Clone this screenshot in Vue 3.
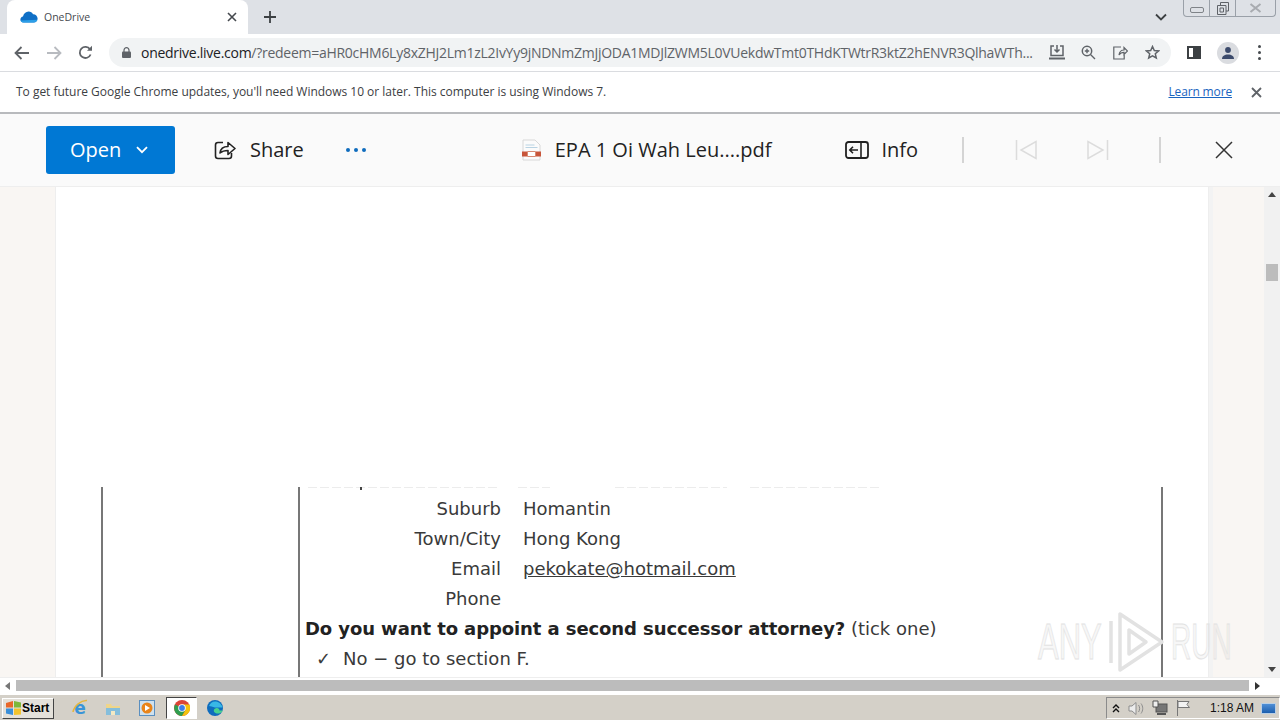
<script setup>
const rows = [
  { label: 'Suburb', value: 'Homantin' },
  { label: 'Town/City', value: 'Hong Kong' },
  { label: 'Email', value: 'pekokate@hotmail.com', link: true },
  { label: 'Phone', value: '' }
]
</script>

<template>
  <div class="screen">
    <div class="tabstrip">
      <div class="tab">
        <svg class="cloud" width="18" height="12" viewBox="0 0 18 12"><path d="M3.6 11.6C1.6 11.6.4 10.2.4 8.6c0-1.6 1.2-2.8 2.6-3C3.6 2.8 5.8.6 8.6.6c2 0 3.6 1 4.4 2.6 2.4-.2 4.6 1.8 4.6 4.4 0 2.2-1.6 4-4 4z" fill="#0f6fc6"/><path d="M.6 9.4C1 10.8 2.200 11.600 3.600 11.600h10c2 0 3.400-1.200 3.900-2.800z" fill="#2c9fe8"/></svg>
        <span class="tab-title">OneDrive</span>
        <svg class="tab-close" width="10" height="10" viewBox="0 0 10 10"><path d="M1 1l8 8M9 1l-8 8" stroke="#45494e" stroke-width="1.600"/></svg>
      </div>
      <svg class="newtab" width="12" height="12" viewBox="0 0 12 12"><path d="M6 0v12M0 6h12" stroke="#3c4043" stroke-width="1.800"/></svg>
      <div class="strip-fill"></div>
      <svg class="tabs-menu" width="12" height="8" viewBox="0 0 12 8"><path d="M1 1.500l5 5 5-5" fill="none" stroke="#3c4043" stroke-width="1.800"/></svg>
      <div class="wincontrols">
        <div class="wc wc-min"><span class="min-glyph"></span></div>
        <div class="wc wc-max">
          <svg width="12" height="13" viewBox="0 0 12 13"><path d="M3.500 3V.5h8v8.500H9M.5 3.500h8.500v9H.5zM3 6h3.500v4H3z" fill="none" stroke="#5f6368"/></svg>
        </div>
        <div class="wc wc-close">
          <svg width="13" height="10" viewBox="0 0 13 10"><path d="M1.500 1l10 8M11.500 1l-10 8" stroke="#a8abb0" stroke-width="2"/></svg>
        </div>
      </div>
    </div>

    <div class="toolbar">
      <svg class="nav" width="16" height="14" viewBox="0 0 16 14"><path d="M15 7H2M7.500 1L1.500 7l6 6" fill="none" stroke="#5f6368" stroke-width="1.800"/></svg>
      <svg class="nav" width="16" height="14" viewBox="0 0 16 14"><path d="M1 7h13M8.500 1l6 6-6 6" fill="none" stroke="#b8bbc0" stroke-width="1.800"/></svg>
      <svg class="nav" width="15" height="15" viewBox="0 0 15 15"><path d="M12.600 9.500A5.600 5.600 0 1 1 12 4.200" fill="none" stroke="#5f6368" stroke-width="1.800"/><path d="M14 .8v5H9z" fill="#5f6368"/></svg>
      <div class="omnibox">
        <svg class="lock" width="9" height="11" viewBox="0 0 9 11"><path d="M2 5V3.200a2.500 2.500 0 0 1 5 0V5" fill="none" stroke="#5f6368" stroke-width="1.200"/><rect y="4.500" width="9" height="6.500" rx="1" fill="#5f6368"/></svg>
        <div class="url"><span class="host">onedrive.live.com</span><span class="path">/?redeem=aHR0cHM6Ly8xZHJ2Lm1zL2IvYy9jNDNmZmJjODA1MDJlZWM5L0VUekdwTmt0THdKTWtrR3ktZ2hENVR3QlhaWTh...</span></div>
        <svg class="omni-ic" width="16" height="15" viewBox="0 0 16 15"><path d="M5 1H2v9.500h12V1h-3M8 0v6.500M5.500 4.500L8 7l2.500-2.500" fill="none" stroke="#5f6368" stroke-width="1.500"/><path d="M0 12.500h16v2H0z" fill="#5f6368"/></svg>
        <svg class="omni-ic zoom-ic" width="15" height="15" viewBox="0 0 15 15"><circle cx="6" cy="6" r="4.700" fill="none" stroke="#5f6368" stroke-width="1.500"/><path d="M9.500 9.500l4.500 4.500M3.800 6h4.400M6 3.800v4.400" stroke="#5f6368" stroke-width="1.400"/></svg>
        <svg class="omni-ic" width="15" height="14" viewBox="0 0 15 14"><path d="M8 1H.8v12h10.400V9M6 9C6.500 5.500 9 4 11 4V1.500L14.500 5 11 8.500V6.300C9 6.300 7.300 7 6 9z" fill="none" stroke="#5f6368" stroke-width="1.200"/></svg>
        <svg class="omni-ic" width="15" height="15" viewBox="0 0 15 15"><path d="M7.500 1.500l1.800 4 4.300.4-3.300 2.900 1 4.200-3.800-2.200L3.700 13l1-4.200L1.400 5.900l4.300-.4z" fill="none" stroke="#5f6368" stroke-width="1.500"/></svg>
      </div>
      <div class="sidepanel"></div>
      <div class="avatar">
        <svg width="12" height="12" viewBox="0 0 12 12"><circle cx="6" cy="3" r="2.900" fill="#3c4a6b"/><path d="M0 12c0-3 2.500-4.500 6-4.500S12 9 12 12z" fill="#3c4a6b"/></svg>
      </div>
      <div class="kebab"><i></i><i></i><i></i></div>
    </div>

    <div class="infobar">
      <span class="info-msg">To get future Google Chrome updates, you'll need Windows 10 or later. This computer is using Windows 7.</span>
      <a class="learn">Learn more</a>
      <svg class="info-close" width="11" height="11" viewBox="0 0 11 11"><path d="M1 1l9 9M10 1l-9 9" stroke="#5f6368" stroke-width="1.800"/></svg>
    </div>

    <div class="commandbar">
      <button class="open-btn">Open
        <svg width="12" height="8" viewBox="0 0 12 8"><path d="M1 1.200l5 5 5-5" fill="none" stroke="#fff" stroke-width="1.800"/></svg>
      </button>
      <div class="share">
        <svg width="22" height="22" viewBox="0 0 22 22"><path d="M9 3.500H4a2.500 2.500 0 0 0-2.500 2.500v11A2.500 2.500 0 0 0 4 19.500h11a2.500 2.500 0 0 0 2.500-2.500v-3" fill="none" stroke="#222" stroke-width="1.600"/><path d="M6 14c.5-4.500 4-6.500 8-6.500V3.500l7 6-7 6v-4c-3.500 0-6 .8-8 2.500z" fill="none" stroke="#222" stroke-width="1.600" stroke-linejoin="round"/></svg>
        <span>Share</span>
      </div>
      <div class="more"><i></i><i></i><i></i></div>
      <div class="file">
        <svg width="19" height="22" viewBox="0 0 19 22"><path d="M1 1h12l5 5v15H1z" fill="#fbfbfb" stroke="#d8d8d8"/><path d="M3.500 6h9M3.500 8.500h12" stroke="#b9d3e3"/><path d="M0 12.500h5.500v5H0zM13.500 12.500H19v5h-5.500z" fill="#c8553a"/><path d="M5.500 12.500h8v5h-8z" fill="#fff" stroke="#d78a72"/></svg>
        <span>EPA 1 Oi Wah Leu....pdf</span>
      </div>
      <div class="info">
        <svg width="24" height="18" viewBox="0 0 24 18"><rect x="1" y="1" width="22" height="16" rx="2.500" fill="none" stroke="#222" stroke-width="1.800"/><path d="M16 1v16M13 9H5M8 5.800L4.800 9 8 12.200" fill="none" stroke="#222" stroke-width="1.600"/></svg>
        <span>Info</span>
      </div>
      <span class="vsep"></span>
      <svg class="pager" width="22" height="22" viewBox="0 0 22 22"><path d="M1.500 1v20M21 2.500v17L6 11z" fill="none" stroke="#dcdcdc" stroke-width="1.500"/></svg>
      <svg class="pager" width="22" height="22" viewBox="0 0 22 22"><path d="M20.500 1v20M1 2.500v17L16 11z" fill="none" stroke="#dcdcdc" stroke-width="1.500"/></svg>
      <span class="vsep"></span>
      <svg class="viewer-close" width="18" height="18" viewBox="0 0 18 18"><path d="M1 1l16 16M17 1L1 17" stroke="#333" stroke-width="1.500"/></svg>
    </div>

    <div class="viewport">
      <div class="gutter"></div>
      <div class="page">
        <div class="form">
          <div class="col-left"></div>
          <div class="col-right">
            <div class="cut-line"><i class="cut-a"></i><i class="cut-b"></i><i class="cut-c"></i><i class="cut-d"></i><em class="cut-dot"></em></div>
            <div v-for="row in rows" :key="row.label" class="row">
              <span class="label">{{ row.label }}</span>
              <span :class="['value', { 'value-link': row.link }]">{{ row.value }}</span>
            </div>
            <div class="row question"><b>Do you want to appoint a second successor attorney?</b> (tick one)</div>
            <div class="row answer"><span class="tick">✓</span>No − go to section F.</div>
          </div>
        </div>
      </div>
      <div class="gutter gutter-right"></div>
      <div class="vscroll">
        <span class="arrow-up"></span>
        <span class="thumb"></span>
        <span class="arrow-down"></span>
      </div>
      <div class="watermark" aria-hidden="true">
        <span class="wm-any">ANY</span>
        <svg width="58" height="62" viewBox="0 0 58 62"><path d="M3 10v42M12 3v56l42-28zM21 19v24l17-12z" fill="none" stroke="#e2e2e2" stroke-width="3.500" stroke-linejoin="round"/></svg>
        <span class="wm-run">RUN</span>
      </div>
    </div>

    <div class="hscroll">
      <span class="h-left"></span>
      <span class="h-thumb"></span>
      <span class="h-right"></span>
      <span class="h-corner"></span>
    </div>

    <div class="taskbar">
      <div class="start">
        <svg width="17" height="16" viewBox="0 0 17 16"><path d="M1 3l7-2v6.500H1z" fill="#e8672a"/><path d="M9 1l7 1.500v5H9z" fill="#7db83a"/><path d="M1 8.500h7V15l-7-1.500z" fill="#3a8fd9"/><path d="M9 8.500h7v6L9 15z" fill="#f1c32e"/></svg>
        <span>Start</span>
      </div>
      <div class="quick">
        <svg width="18" height="18" viewBox="0 0 18 18"><text x="9" y="15" text-anchor="middle" font-family="DejaVu Sans" font-size="17" font-weight="700" fill="#3a94d8">e</text><path d="M2 13C3 7 10 1 16 1.500" fill="none" stroke="#e5b63d" stroke-width="1.500"/></svg>
        <svg width="16" height="15" viewBox="0 0 16 15"><path d="M1 3h5l1 2h8v9H1z" fill="#efd58a"/><path d="M1 7h14v7H1z" fill="#85bedc"/><path d="M6 10h4v4H6z" fill="#f3e9c4"/></svg>
        <svg class="media" width="16" height="16" viewBox="0 0 16 16"><rect x=".5" y=".5" width="15" height="15" fill="#cfe1ee" stroke="#5a8fc0"/><circle cx="8" cy="8" r="5.500" fill="#e98419"/><path d="M6 5l5 3-5 3z" fill="#fff"/></svg>
        <div class="chrome-item">
          <svg width="16" height="16" viewBox="0 0 16 16"><circle cx="8" cy="8" r="8" fill="#dc4437"/><path d="M8 8L1 4.500A8 8 0 0 0 8 16l3.500-6z" fill="#2f9e4f"/><path d="M8 4.500h7.400A8 8 0 0 1 8 16l3.500-6z" fill="#f4c20d"/><circle cx="8" cy="8" r="3.800" fill="#fff"/><circle cx="8" cy="8" r="2.900" fill="#3f7ee8"/></svg>
        </div>
        <svg width="16" height="16" viewBox="0 0 16 16"><circle cx="8" cy="8" r="8" fill="#0f6cbd"/><path d="M16 9c0 3-3 5-6 4.500C7 13 6 10.500 7.500 9c2-1.800 5-1 5 1.500h3.300z" fill="#47d18f"/><path d="M2 6c1-3 4-5 7-4.500 3 .5 6 3 6.500 6H8C5.500 7 3.500 6 2 6z" fill="#38b7e6"/></svg>
      </div>
      <div class="task-fill"></div>
      <div class="tray">
        <svg width="8" height="9" viewBox="0 0 8 9"><path d="M1 4l3-3 3 3M1 8l3-3 3 3" fill="none" stroke="#111" stroke-width="1.400"/></svg>
        <svg width="16" height="15" viewBox="0 0 16 15"><path d="M1 5h3l4-3.500v12L4 10H1z" fill="#ececec" stroke="#8d8d8d"/><path d="M10.500 4c1.500 2 1.500 5 0 7M13 2.500c2.300 3 2.300 7 0 10" fill="none" stroke="#8d8d8d"/></svg>
        <svg width="16" height="16" viewBox="0 0 16 16"><rect x="4" y="4" width="11" height="8" fill="#767676" stroke="#555"/><path d="M1 1h5v6H1z" fill="#eee" stroke="#555"/><path d="M5 14h9" stroke="#555" stroke-width="2"/></svg>
        <svg width="15" height="16" viewBox="0 0 15 16"><path d="M1.500 0v16M2 1.500h11L11 4.500l2.500 3H2z" fill="#f3f3f3" stroke="#777"/></svg>
        <span class="clock">1:18 AM</span>
        <span class="show-desktop"></span>
      </div>
    </div>
  </div>
</template>

<style scoped>
.screen { width: 1280px; height: 720px; display: flex; flex-direction: column; overflow: hidden; background: #fff; font-family: "Open Sans", "Noto Sans", sans-serif; position: relative; }
svg { display: block; flex: none; }

.tabstrip { height: 34px; flex: none; display: flex; align-items: center; background: #dee1e6; }
.tab { width: 241px; height: 34px; margin: 0 0 0 7px; align-self: flex-end; background: #fff; border-radius: 8px 8px 0 0; display: flex; align-items: center; padding: 0 11px 0 13px; box-sizing: border-box; }
.tab-title { font-size: 10.500px; color: #45494e; margin-left: 6px; flex: 1; }
.newtab { margin-left: 16px; }
.strip-fill { flex: 1; }
.tabs-menu { margin: 0 16px 0 0; }
.wincontrols { width: 93px; height: 17px; align-self: flex-start; margin-right: 4px; display: flex; border: 1px solid #9aa0a8; border-top: 0; border-radius: 0 0 4px 4px; box-sizing: border-box; }
.wc { height: 16px; display: flex; align-items: center; justify-content: center; border-right: 1px solid #9aa0a8; }
.wc-min { width: 25px; }
.min-glyph { width: 12px; height: 4px; border: 1px solid #7f8388; border-radius: 2px; margin-top: 4px; }
.wc-max { width: 25px; }
.wc-close { flex: 1; border-right: 0; }

.toolbar { height: 38px; flex: none; display: flex; align-items: center; background: #fff; border-bottom: 1px solid #dadce0; box-sizing: border-box; }
.nav { margin-left: 16px; }
.toolbar .nav:first-child { margin-left: 14px; }
.omnibox { width: 1062px; height: 29px; margin-left: 16px; border-radius: 15px; background: #f1f3f4; display: flex; align-items: center; padding: 0 11px 0 13px; box-sizing: border-box; }
.lock { margin-right: 10px; }
.url { width: 894px; font-size: 14px; letter-spacing: -.27px; white-space: nowrap; margin-right: 16px; }
.host { color: #202124; }
.path { color: #5f6368; }
.omni-ic { margin-right: 17px; }
.zoom-ic { margin-left: -1px; }
.omni-ic:last-child { margin-right: 0; }
.sidepanel { width: 14px; height: 13px; margin-left: 16px; background: #fff; border: 2px solid #3c4043; border-left-width: 8px; box-sizing: border-box; transform: scaleX(-1); }
.avatar { width: 22px; height: 22px; border-radius: 50%; margin-left: 16px; background: #dadce0; display: flex; align-items: center; justify-content: center; }
.kebab { margin-left: 19px; display: flex; flex-direction: column; gap: 3px; }
.kebab i { width: 3px; height: 3px; border-radius: 50%; background: #45494e; }

.infobar { height: 40px; flex: none; display: flex; align-items: center; padding: 0 18px 0 16px; background: #fff; font-size: 12px; color: #3c4043; }
.info-msg { flex: 1; letter-spacing: -.02px; padding-bottom: 2px; }
.learn { color: #1a64c0; text-decoration: underline; margin-right: 19px; letter-spacing: -.15px; padding-bottom: 2px; }

.commandbar { height: 75px; flex: none; display: flex; align-items: center; background: #fafafa; border-top: 2px solid #b8babd; border-bottom: 1px solid #eee; box-sizing: border-box; padding-left: 46px; color: #222; font-size: 20px; }
.commandbar span { padding-bottom: 2px; }
.open-btn { width: 129px; height: 48px; background: #0078d4; color: #fff; border: 0; border-radius: 3px; font: 400 20px "Open Sans", sans-serif; display: flex; align-items: center; justify-content: flex-start; gap: 15px; padding: 0 0 1px 24px; }
.share { display: flex; align-items: center; gap: 14px; margin-left: 39px; }
.more { display: flex; gap: 4px; margin-left: 42px; }
.more i { width: 4px; height: 4px; border-radius: 50%; background: #0f6cbd; }
.file { display: flex; align-items: center; gap: 14px; margin-left: 156px; }
.info { display: flex; align-items: center; gap: 12px; margin-left: 74px; }
.vsep { width: 2px; height: 26px; padding: 0 !important; background: #d4d4d4; }
.info + .vsep { margin-left: 44px; }
.pager { margin-left: 51px; }
.pager + .pager { margin-left: 50px; }
.pager + .vsep { margin-left: 50px; }
.viewer-close { margin-left: 54px; }

.viewport { height: 490px; flex: none; display: flex; background: #f9f6f3; position: relative; }
.gutter { width: 55px; flex: none; }
.gutter-right { flex: 1; }
.page { width: 1154px; flex: none; box-sizing: border-box; background: #fff; border-left: 1px solid #eee; border-right: 1px solid #eee; box-shadow: 4px 0 0 #f3f3f3; padding: 300px 45px 0 45px; overflow: hidden; }
.form { height: 190px; display: flex; border-left: 2px solid #777; border-right: 2px solid #777; font-family: "DejaVu Sans", Verdana, sans-serif; font-size: 18px; color: #3a3a3a; }
.col-left { width: 195px; flex: none; border-right: 2px solid #777; }
.col-right { flex: 1; position: relative; }
.cut-line { height: 7px; position: relative; }
.cut-line i { position: absolute; top: 0; height: 1px; background: repeating-linear-gradient(90deg, #ececec 0 9px, transparent 9px 12px); }
.cut-a { left: 8px; width: 190px; }
.cut-b { left: 218px; width: 32px; }
.cut-c { left: 315px; width: 112px; }
.cut-d { left: 450px; width: 130px; }
.cut-dot { position: absolute; left: 60px; top: 0; width: 2px; height: 3px; background: #444; }
.row { height: 29.900px; display: flex; align-items: center; white-space: pre; }
.label { width: 201px; text-align: right; }
.value { margin-left: 22px; }
.value-link { text-decoration: underline; }
.question { padding-left: 5px; display: block; line-height: 29.900px; }
.question b { color: #222; letter-spacing: -.09px; }
.answer { padding-left: 16px; }
.tick { width: 27px; font-size: 18px; }

.vscroll { width: 16px; flex: none; background: #f1f1f1; position: relative; display: flex; justify-content: center; }
.arrow-up { position: absolute; top: 5px; border: 4px solid transparent; border-top: 0; border-bottom: 5px solid #444; }
.arrow-down { position: absolute; bottom: 5px; border: 4px solid transparent; border-bottom: 0; border-top: 5px solid #444; }
.thumb { position: absolute; top: 77px; width: 12px; height: 17px; background: #bcbcbc; }

.watermark { position: absolute; left: 1038px; top: 424px; display: flex; align-items: center; font-family: "Liberation Sans", sans-serif; font-size: 50px; font-weight: 400; color: rgba(0,0,0,.03); -webkit-text-stroke: 1px #e2e2e2; pointer-events: none; }
.watermark span { display: block; width: 62px; white-space: nowrap; transform-origin: left center; }
.wm-any { transform: scaleX(.62); }
.wm-run { transform: scaleX(.56); }
.watermark svg { margin: 0 5px 0 8px; }

.hscroll { height: 16px; flex: none; background: #fff; display: flex; align-items: center; border-top: 1px solid #eee; box-sizing: border-box; position: relative; }
.h-left { margin-left: 5px; border: 4px solid transparent; border-left: 0; border-right: 5px solid #777; }
.h-thumb { width: 1233px; height: 11px; margin-left: 6px; background: #bcbcbc; }
.h-right { margin-left: 6px; border: 4px solid transparent; border-right: 0; border-left: 5px solid #333; }
.h-corner { flex: 1; }

.taskbar { height: 28px; flex: none; background: #d4d0c8; border-top: 2px solid #fff; box-sizing: border-box; display: flex; align-items: center; position: relative; }
.start { width: 52px; height: 21px; margin-left: 2px; background: #e4e1da; border: 1px solid #fff; border-right-color: #444; border-bottom-color: #444; box-sizing: border-box; display: flex; align-items: center; gap: 0; padding-left: 2px; font: 700 12px "Liberation Sans", sans-serif; color: #000; }
.quick { display: flex; align-items: center; gap: 16px; margin-left: 17px; }
.media { margin-left: 2px; }
.chrome-item { width: 31px; height: 22px; margin: 0 -6px 0 -5px; background: #fff; border: 1px solid #444; border-right-color: #fff; border-bottom-color: #fff; box-sizing: border-box; display: flex; align-items: center; justify-content: center; }
.task-fill { flex: 1; }
.tray { width: 174px; height: 22px; border: 1px solid #8b8b8b; border-right-color: #fff; border-bottom-color: #fff; box-sizing: border-box; display: flex; align-items: center; padding-left: 5px; gap: 8px; font: 12px "Liberation Sans", sans-serif; color: #111; }
.clock { margin-left: 11px; font-size: 12px; white-space: nowrap; }
.show-desktop { width: 15px; height: 11px; background: linear-gradient(#4f8fd6, #1d5fae); border: 1px solid #b9cfe5; box-sizing: border-box; margin-left: -1px; }
</style>
